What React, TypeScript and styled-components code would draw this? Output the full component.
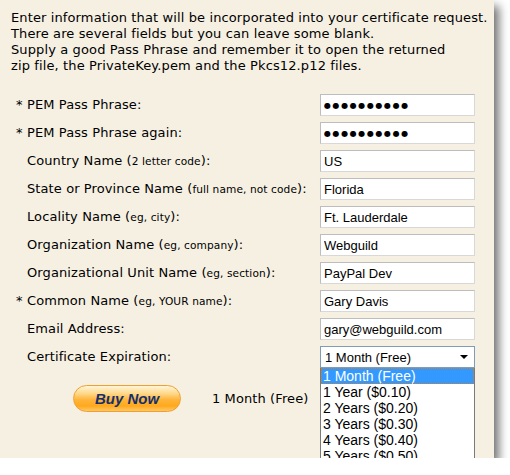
import React from "react";
import styled, { createGlobalStyle } from "styled-components";

const Global = createGlobalStyle`
  html, body { margin: 0; padding: 0; background: #ffffff; }
  body { font-family: "DejaVu Sans", Verdana, sans-serif; }
`;

const Panel = styled.div`
  position: relative;
  width: 494px;
  height: 458px;
  box-sizing: border-box;
  padding: 10px 0 0 11px;
  background: #f6f0e3;
  box-shadow: 5px 6px 9px rgba(0, 0, 0, 0.55);
  overflow: hidden;
  color: #000;
`;

const Intro = styled.p`
  margin: 0;
  font-size: 13px;
  line-height: 16px;
  letter-spacing: 0.12px;
`;

const Form = styled.div`
  margin-top: 20px;
  display: grid;
  grid-template-columns: 11px 293px 155px;
  grid-auto-rows: 28px;
  align-items: start;
  padding-left: 5px;
`;

const Star = styled.span`
  font-size: 13px;
  line-height: 21px;
`;

const Label = styled.span`
  font-size: 13px;
  line-height: 21px;
  white-space: nowrap;
  letter-spacing: 0.1px;
`;

const Hint = styled.span`
  font-size: 10.6px;
`;

const Field = styled.input`
  box-sizing: border-box;
  width: 155px;
  height: 22px;
  margin: 0;
  padding: 0 3px;
  border: 1px solid #bdbdbd;
  border-right-color: #d8d8d8;
  border-bottom-color: #d8d8d8;
  background: #fff;
  font-family: "Liberation Sans", Arial, sans-serif;
  font-size: 13px;
  color: #000;
  outline: none;
`;

const Dots = styled(Field)`
  font-family: "DejaVu Sans", sans-serif;
  font-size: 8px;
  letter-spacing: 1.6px;
`;

const SelectWrap = styled.div`
  position: relative;
  width: 155px;
`;

const SelectBox = styled.div`
  box-sizing: border-box;
  height: 22px;
  border: 1px solid #7f9db9;
  background: #fff;
  display: flex;
  align-items: center;
  justify-content: space-between;
  padding: 0 6px 0 4px;
  font-family: "Liberation Sans", Arial, sans-serif;
  font-size: 13px;
`;

const Arrow = styled.span`
  width: 0;
  height: 0;
  border-left: 4px solid transparent;
  border-right: 4px solid transparent;
  border-top: 4px solid #000;
`;

const ListBox = styled.ul`
  position: absolute;
  left: 0;
  top: 22px;
  width: 155px;
  box-sizing: border-box;
  margin: 0;
  padding: 0;
  list-style: none;
  background: #fff;
  border: 1px solid #7a7a7a;
  border-top: none;
  z-index: 2;
`;

const Option = styled.li<{ $selected?: boolean }>`
  height: 16px;
  line-height: 16px;
  padding: 0 2px;
  font-family: "Liberation Sans", Arial, sans-serif;
  font-size: 14px;
  color: ${(p) => (p.$selected ? "#fff" : "#000")};
  background: ${(p) => (p.$selected ? "#3399ff" : "transparent")};
  outline: ${(p) => (p.$selected ? "1px dotted #d08020" : "none")};
  outline-offset: -1px;
`;

const BuyRow = styled.div`
  display: flex;
  align-items: center;
  margin-top: 11px;
  padding-left: 62px;
  gap: 31px;
`;

const BuyButton = styled.button`
  width: 108px;
  height: 27px;
  border-radius: 14px;
  border: 1px solid #f0a030;
  background: linear-gradient(
    to bottom,
    #fff6d8 0%,
    #ffd88a 30%,
    #ffb43a 55%,
    #ffa91c 80%,
    #ffc86a 100%
  );
  font-family: "Liberation Sans", Arial, sans-serif;
  font-weight: bold;
  font-style: italic;
  font-size: 15px;
  color: #13306e;
  padding: 0;
  cursor: pointer;
`;

const Chosen = styled.span`
  font-size: 13px;
  letter-spacing: 0.1px;
`;

type Row = {
  star?: boolean;
  label: string;
  hint?: string;
  value: string;
  pw?: boolean;
};

const rows: Row[] = [
  { star: true, label: "PEM Pass Phrase", value: "●●●●●●●●●●", pw: true },
  { star: true, label: "PEM Pass Phrase again", value: "●●●●●●●●●●", pw: true },
  { label: "Country Name", hint: "2 letter code", value: "US" },
  { label: "State or Province Name", hint: "full name, not code", value: "Florida" },
  { label: "Locality Name", hint: "eg, city", value: "Ft. Lauderdale" },
  { label: "Organization Name", hint: "eg, company", value: "Webguild" },
  { label: "Organizational Unit Name", hint: "eg, section", value: "PayPal Dev" },
  { star: true, label: "Common Name", hint: "eg, YOUR name", value: "Gary Davis" },
  { label: "Email Address", value: "gary@webguild.com" },
];

const options = [
  "1 Month (Free)",
  "1 Year ($0.10)",
  "2 Years ($0.20)",
  "3 Years ($0.30)",
  "4 Years ($0.40)",
  "5 Years ($0.50)",
];

export default function App() {
  return (
    <>
      <Global />
      <Panel>
        <Intro>
          Enter information that will be incorporated into your certificate request.
          <br />
          There are several fields but you can leave some blank.
          <br />
          Supply a good Pass Phrase and remember it to open the returned
          <br />
          zip file, the PrivateKey.pem and the Pkcs12.p12 files.
        </Intro>
        <Form>
          {rows.map((r) => (
            <React.Fragment key={r.label}>
              <Star>{r.star ? "*" : ""}</Star>
              <Label>
                {r.label}
                {r.hint ? (
                  <>
                    {" ("}
                    <Hint>{r.hint}</Hint>
                    {")"}
                  </>
                ) : null}
                :
              </Label>
              {r.pw ? (
                <Dots readOnly value={r.value} />
              ) : (
                <Field readOnly value={r.value} />
              )}
            </React.Fragment>
          ))}
          <Star />
          <Label>Certificate Expiration:</Label>
          <SelectWrap>
            <SelectBox>
              <span>1 Month (Free)</span>
              <Arrow />
            </SelectBox>
            <ListBox>
              {options.map((o, i) => (
                <Option key={o} $selected={i === 0}>
                  {o}
                </Option>
              ))}
            </ListBox>
          </SelectWrap>
        </Form>
        <BuyRow>
          <BuyButton>Buy Now</BuyButton>
          <Chosen>1 Month (Free)</Chosen>
        </BuyRow>
      </Panel>
    </>
  );
}
